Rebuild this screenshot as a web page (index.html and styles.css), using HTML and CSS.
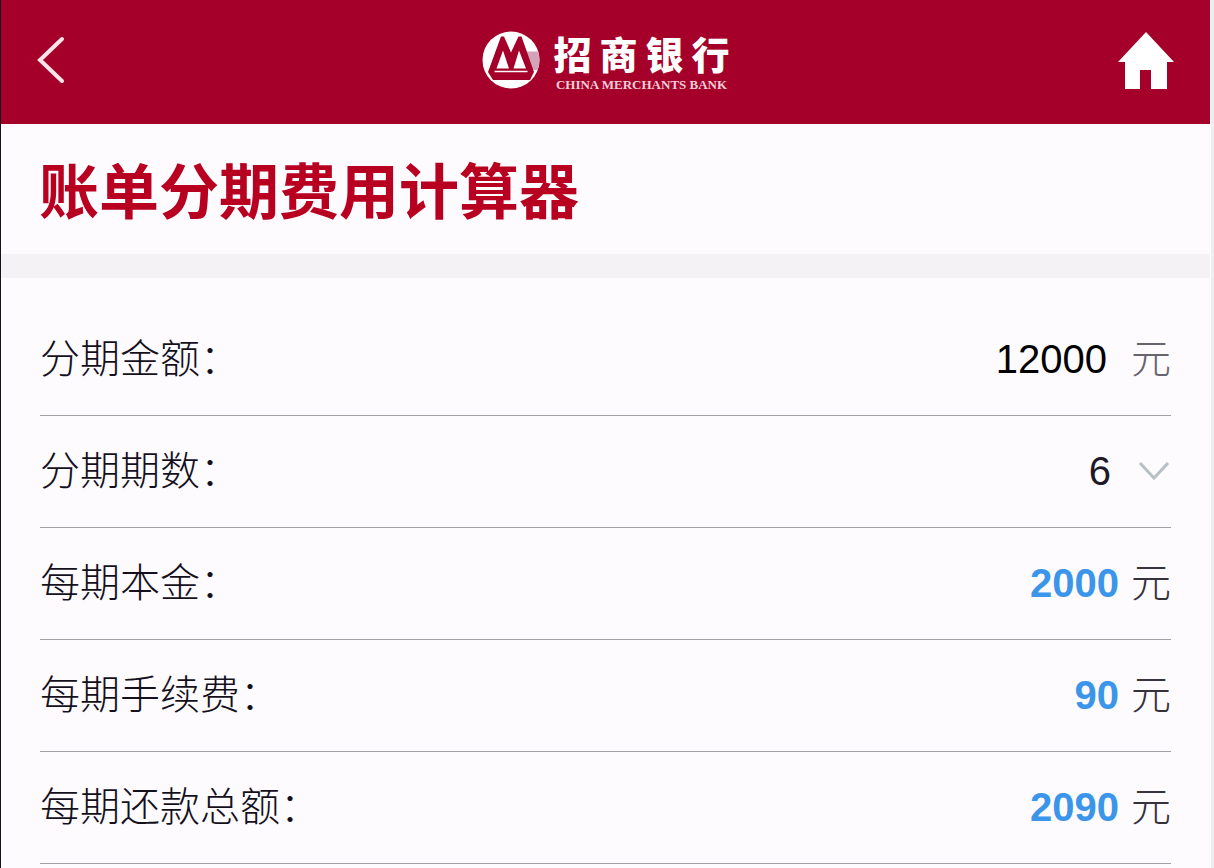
FILE: index.html
```html
<!DOCTYPE html>
<html lang="zh-CN">
<head>
    <meta charset="UTF-8">
    <meta name="viewport" content="width=device-width, initial-scale=1.0">
    <title>账单分期费用计算器</title>
    <link rel="stylesheet" href="styles.css">
</head>
<body>
    <div class="page">
        <header class="navbar">
            <button class="nav-button" type="button" aria-label="返回">
                <svg width="28" height="48" viewBox="0 0 28 48">
                    <path d="M25 3 L3 24 L25 45" fill="none" stroke="#ffe3ea" stroke-width="4" stroke-linecap="round"/>
                </svg>
            </button>
            <div class="logo">
                <svg class="logo-mark" width="58" height="58" viewBox="0 0 58 58">
                    <circle cx="29" cy="29" r="28.5" fill="#fff"/>
                    <path d="M44 20.5 H56.2 Q59 30 55.6 39 H50 Z" fill="#d3a3b8"/>
                    <path d="M19 5.5 H22 L29 21.5 L36.5 5.5 H39.5 L52 41 L48 49 H11 L6 41 Z" fill="#a50029"/>
                    <path d="M21 19.5 L14.5 37.5 H27 Z M37 19.5 L31.5 37.5 H44 Z" fill="#fff"/>
                    <path d="M12.5 40.5 H45.5" stroke="#fff" stroke-width="1.5"/>
                </svg>
                <div class="logo-text">
                    <div class="logo-cn"><span>招</span><span>商</span><span>银</span><span>行</span></div>
                    <div class="logo-en">CHINA MERCHANTS BANK</div>
                </div>
            </div>
            <a class="nav-button" href="#" aria-label="首页">
                <svg width="56" height="58" viewBox="0 0 56 58">
                    <path d="M28 1 L56 31 H49 V58 H33 V39 H22 V58 H7 V31 H0 Z" fill="#fff"/>
                </svg>
            </a>
        </header>

        <h1 class="title">账单分期费用计算器</h1>

        <form class="calculator">
            <div class="row">
                <label for="amount">分期金额：</label>
                <input class="amount" id="amount" type="text" inputmode="numeric" value="12000">
                <span class="unit unit-light">元</span>
            </div>
            <div class="row">
                <label for="periods">分期期数：</label>
                <div class="select-box">
                    <select class="periods" id="periods">
                        <option>3</option>
                        <option selected>6</option>
                        <option>12</option>
                        <option>24</option>
                    </select>
                    <svg class="arrow" width="32" height="20" viewBox="0 0 32 20">
                        <path d="M2 2 L16 17 L30 2" fill="none" stroke="#b7c0c4" stroke-width="3"/>
                    </svg>
                </div>
            </div>
            <div class="row">
                <label for="principal">每期本金：</label>
                <output class="result" id="principal">2000</output>
                <span class="unit">元</span>
            </div>
            <div class="row">
                <label for="fee">每期手续费：</label>
                <output class="result" id="fee">90</output>
                <span class="unit">元</span>
            </div>
            <div class="row">
                <label for="total">每期还款总额：</label>
                <output class="result" id="total">2090</output>
                <span class="unit">元</span>
            </div>
        </form>
    </div>

    <script>
        const amount = document.getElementById('amount');
        const periods = document.getElementById('periods');

        // 每期手续费率 0.75%
        function calculate() {
            const total = Number(amount.value) || 0;
            const principal = Math.round(total / Number(periods.value));
            const fee = Math.round(total * 0.0075);
            document.getElementById('principal').textContent = principal;
            document.getElementById('fee').textContent = fee;
            document.getElementById('total').textContent = principal + fee;
        }

        amount.addEventListener('input', calculate);
        periods.addEventListener('change', calculate);
    </script>
</body>
</html>
```
FILE: styles.css
```css
* {
    box-sizing: border-box;
}
body {
    margin: 0;
    background-color: #eeeef0;
    font-family: "Liberation Sans", "Noto Sans CJK SC", sans-serif;
    overflow-x: hidden;
}
.page {
    min-height: 100vh;
    margin-right: 3px;
    border-left: 1px solid #14121f;
    border-right: 1px solid #fff;
    background-color: #fdfbfe;
}
.navbar {
    display: flex;
    justify-content: space-between;
    align-items: center;
    height: 124px;
    padding: 0 36px 4px;
    background-color: #a50029;
}
.nav-button {
    display: flex;
    align-items: center;
    width: 56px;
    padding: 0;
    border: none;
    background: none;
    cursor: pointer;
}
.logo {
    display: flex;
    align-items: center;
    gap: 14px;
    color: #fff;
}
.logo-text {
    width: 176px;
    padding-top: 2px;
}
.logo-cn {
    display: flex;
    justify-content: space-between;
    font-family: "Noto Sans CJK SC", sans-serif;
    font-size: 38px;
    font-weight: 900;
    line-height: 48px;
}
.logo-en {
    font-family: "Liberation Serif", serif;
    font-size: 13px;
    font-weight: bold;
    line-height: 16px;
    text-align: center;
    white-space: nowrap;
    color: #f3cdd8;
}
.title {
    margin: 0;
    padding: 20px 38px 22px;
    border-bottom: 24px solid #f4f2f4;
    color: #b80020;
    font-family: "Noto Sans CJK SC", sans-serif;
    font-size: 60px;
    font-weight: bold;
    line-height: 88px;
}
.calculator {
    padding: 26px 39px 0;
}
.row {
    display: flex;
    align-items: center;
    height: 112px;
    border-bottom: 1px solid #a0a0a4;
    font-size: 40px;
    font-weight: 300;
    color: #14101c;
}
.row label {
    flex: 1;
    padding-bottom: 8px;
    font-family: "Noto Sans CJK SC", sans-serif;
}
.amount,
.periods {
    padding: 0;
    border: none;
    background: none;
    font-family: inherit;
    font-size: 40px;
    color: #000;
    text-align: right;
}
.amount {
    width: 300px;
    margin-right: 12px;
}
.select-box {
    position: relative;
}
.periods {
    width: 200px;
    padding-right: 60px;
    appearance: none;
    text-align-last: right;
    color: #201a28;
}
/* 下拉箭头，覆盖在选择框右侧 */
.arrow {
    position: absolute;
    top: 12px;
    right: 1px;
    pointer-events: none;
}
.result {
    color: #3b96ea;
    font-weight: bold;
}
.unit {
    margin-left: 12px;
    padding-bottom: 8px;
    font-family: "Noto Sans CJK SC", sans-serif;
    color: #35323c;
}
.unit-light {
    color: #66646e;
}
```
